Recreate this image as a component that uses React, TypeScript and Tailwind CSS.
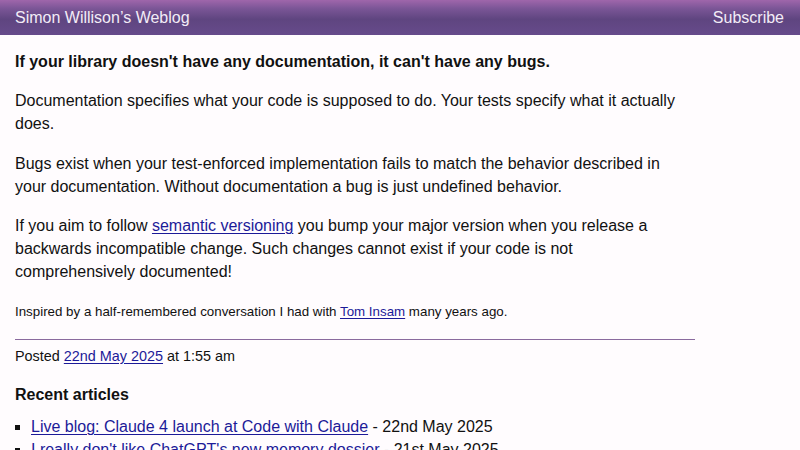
const recent = [
  { title: 'Live blog: Claude 4 launch at Code with Claude', date: '22nd May 2025' },
  { title: "I really don't like ChatGPT's new memory dossier", date: '21st May 2025' },
  { title: 'Building software on top of Large Language Models', date: '15th May 2025' },
];

const linkCls = 'text-[#1c1a98] underline underline-offset-2 decoration-1';

const App = () => {
  return (
    <div
      className="min-h-[450px] bg-[#fffcfe] text-[#111]"
      style={{ fontFamily: '"Liberation Sans", Arial, sans-serif' }}
    >
      {/* header bar */}
      <div className="flex h-[35px] items-center justify-between bg-[linear-gradient(to_bottom,#9f66ab_0%,#7a5596_25%,#5f4580_55%,#664b8b_100%)] px-[15px] pr-[16px] text-[16px] text-[#f3ecf7]">
        <span>Simon Willison’s Weblog</span>
        <span>Subscribe</span>
      </div>

      <div className="max-w-[695px] pl-[15px] pr-[15px] pt-[15px]">
        <p className="text-[16px] font-bold leading-[23.2px]">
          If your library doesn't have any documentation, it can't have any bugs.
        </p>
        <p className="mt-[16px] text-[16px] leading-[23.2px]">
          Documentation specifies what your code is supposed to do. Your tests specify what it actually
          does.
        </p>
        <p className="mt-[16px] text-[16px] leading-[23.2px]">
          Bugs exist when your test-enforced implementation fails to match the behavior described in
          your documentation. Without documentation a bug is just undefined behavior.
        </p>
        <p className="mt-[16px] text-[16px] leading-[23.2px]">
          If you aim to follow <a className={linkCls}>semantic versioning</a> you bump your major version
          when you release a backwards incompatible change. Such changes cannot exist if your code is not
          comprehensively documented!
        </p>
        <p className="mt-[18.5px] text-[13.33px] leading-[19.3px]">
          Inspired by a half-remembered conversation I had with <a className={linkCls}>Tom Insam</a> many
          years ago.
        </p>

        <div className="mt-[17.5px] h-px w-[680px] bg-[#8a6a9e]" />

        <p className="mt-[6px] text-[14.4px] leading-[21px]">
          Posted <a className={linkCls}>22nd May 2025</a> at 1:55 am
        </p>

        <h3 className="mt-[16px] text-[16px] font-bold leading-[23.2px]">Recent articles</h3>
        <ul className="mt-[9px] list-[square] pl-[16px] text-[16px] leading-[23px]">
          {recent.map((r) => (
            <li key={r.title}>
              <a className={linkCls}>{r.title}</a> - {r.date}
            </li>
          ))}
        </ul>
      </div>
    </div>
  );
};

export default App;
